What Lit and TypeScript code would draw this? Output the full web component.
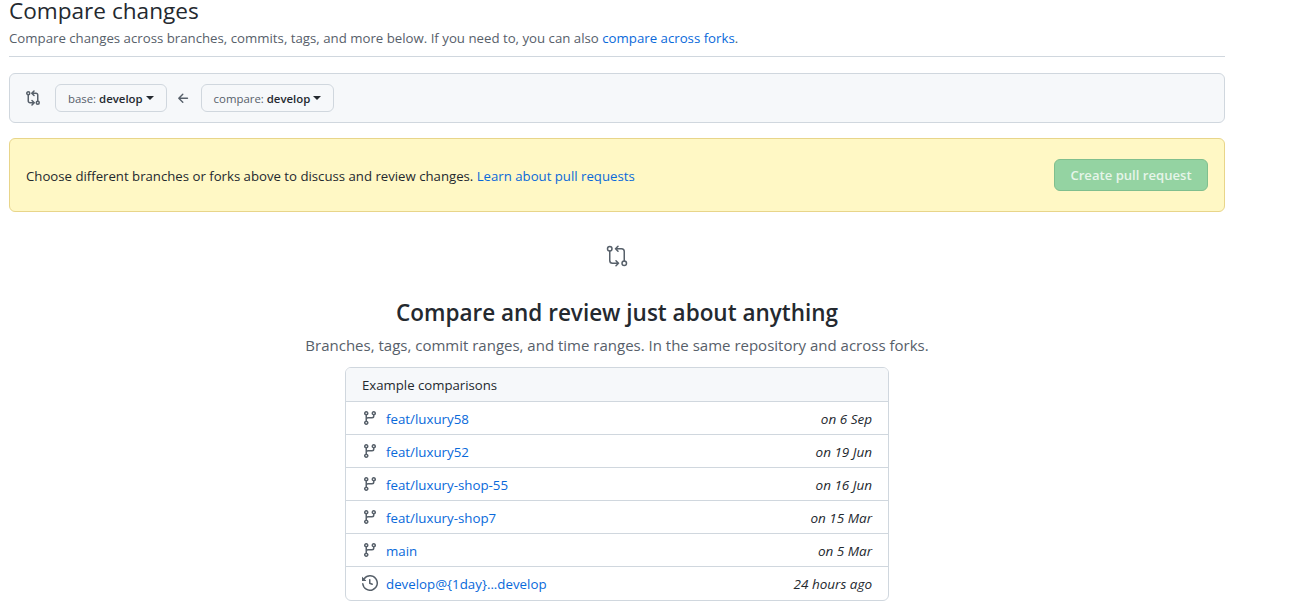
import { LitElement, html, css, svg } from "lit";
import { customElement } from "lit/decorators.js";

const compare = svg`<path d="M3.25 4.75V11a1.75 1.75 0 0 0 1.75 1.75h4M7 10.5l2.25 2.25L7 15M12.75 11.25V5A1.75 1.75 0 0 0 11 3.25H7M9 1 6.75 3.25 9 5.5" fill="none" stroke="currentColor" stroke-width="1.5" stroke-linecap="round" stroke-linejoin="round"/><circle cx="3.25" cy="3.25" r="1.5" fill="none" stroke="currentColor" stroke-width="1.5"/><circle cx="12.75" cy="12.75" r="1.5" fill="none" stroke="currentColor" stroke-width="1.5"/>`;
const compareBig = svg`<path d="M4.75 7V16.5a2.75 2.75 0 0 0 2.75 2.75H13.5M11 16.75l2.5 2.5-2.5 2.5M19.25 17V7.5a2.75 2.75 0 0 0-2.75-2.75H10.5M13 2.25l-2.5 2.5 2.5 2.5" fill="none" stroke="currentColor" stroke-width="1.5" stroke-linecap="round" stroke-linejoin="round"/><circle cx="4.75" cy="4.75" r="2.25" fill="none" stroke="currentColor" stroke-width="1.5"/><circle cx="19.25" cy="19.25" r="2.25" fill="none" stroke="currentColor" stroke-width="1.5"/>`;
const branch = svg`<path fill="currentColor" d="M9.5 3.25a2.25 2.25 0 1 1 3 2.122V6A2.5 2.5 0 0 1 10 8.5H6a1 1 0 0 0-1 1v1.128a2.251 2.251 0 1 1-1.5 0V5.372a2.25 2.25 0 1 1 1.5 0v1.836A2.493 2.493 0 0 1 6 7h4a1 1 0 0 0 1-1v-.628A2.25 2.25 0 0 1 9.5 3.25Zm-6 0a.75.75 0 1 0 1.5 0 .75.75 0 0 0-1.5 0Zm8.25-.75a.75.75 0 1 0 0 1.5.75.75 0 0 0 0-1.5ZM4.25 12a.75.75 0 1 0 0 1.5.75.75 0 0 0 0-1.5Z"/>`;
const history = svg`<path fill="currentColor" d="m.427 1.927 1.215 1.215a8.002 8.002 0 1 1-1.6 5.685.75.75 0 1 1 1.493-.154 6.5 6.5 0 1 0 1.18-4.458l1.358 1.358A.25.25 0 0 1 3.896 6H.25A.25.25 0 0 1 0 5.75V2.104a.25.25 0 0 1 .427-.177ZM7.75 4a.75.75 0 0 1 .75.75v2.992l2.028.812a.75.75 0 0 1-.557 1.392l-2.5-1A.751.751 0 0 1 7 8.25v-3.5A.75.75 0 0 1 7.75 4Z"/>`;
const arrowLeft = svg`<path fill="currentColor" d="M7.78 12.53a.75.75 0 0 1-1.06 0L2.47 8.28a.75.75 0 0 1 0-1.06l4.25-4.25a.751.751 0 0 1 1.042.018.751.751 0 0 1 .018 1.042L4.81 7h7.44a.75.75 0 0 1 0 1.5H4.81l2.97 2.97a.75.75 0 0 1 0 1.06Z"/>`;

const rows = [
  { icon: branch, name: "feat/luxury58", when: "on 6 Sep" },
  { icon: branch, name: "feat/luxury52", when: "on 19 Jun" },
  { icon: branch, name: "feat/luxury-shop-55", when: "on 16 Jun" },
  { icon: branch, name: "feat/luxury-shop7", when: "on 15 Mar" },
  { icon: branch, name: "main", when: "on 5 Mar" },
  { icon: history, name: "develop@{1day}...develop", when: "24 hours ago" },
];

@customElement("app-root")
export class AppRoot extends LitElement {
  static styles = css`
    :host {
      display: block;
      font-family: "Open Sans", "Noto Sans", sans-serif;
      font-size: 13.2px;
      color: #24292f;
      background: #fff;
    }
    a { color: #0969da; text-decoration: none; }
    svg { display: block; flex: none; }
    .page { width: 1216px; margin-left: 9px; }
    .subhead { height: 56px; border-bottom: 1px solid #d0d7de; box-sizing: content-box; }
    h2 { margin: 0; font-size: 22.6px; font-weight: 400; line-height: 22px; }
    .desc { margin-top: 7px; line-height: 18px; color: #57606a; font-size: 13.24px; }
    .range {
      margin-top: 16px; height: 50px; box-sizing: border-box;
      display: flex; align-items: center;
      background: #f6f8fa; border: 1px solid #d0d7de; border-radius: 6px;
      padding-left: 15px; color: #57606a;
    }
    .range .lead { margin-right: 14px; margin-top: -1px; }
    .branch-btn {
      height: 28px; box-sizing: border-box; padding: 0 12px;
      display: flex; align-items: center;
      background: #f6f8fa; border: 1px solid #d0d7de; border-radius: 6px;
      font-size: 11.4px; color: #57606a; white-space: pre;
    }
    .branch-btn b { color: #24292f; font-weight: 600; }
    .caret {
      margin-left: 3px; width: 0; height: 0;
      border: 4px solid transparent; border-top-color: #24292f; border-bottom: 0;
    }
    .arrow { margin: 0 10px 0 9px; width: 15px; height: 15px; }
    .flash {
      margin-top: 15px; height: 74px; box-sizing: border-box;
      display: flex; align-items: center; justify-content: space-between;
      background: #fff8c5; border: 1px solid #e8d58a; border-radius: 6px;
      padding: 0 16px; color: #24292f;
    }
    .flash-text { padding-top: 2px; }
    .create {
      width: 154px; height: 32px; box-sizing: border-box;
      display: flex; align-items: center; justify-content: center;
      background: #94d3a2; border: 1px solid #80bf8e; border-radius: 6px;
      color: #e6f5e9; font-size: 13.1px; font-weight: 600;
    }
    .blank { display: flex; flex-direction: column; align-items: center; }
    .big { margin-top: 32px; width: 24px; height: 24px; color: #57606a; }
    h3 { margin: 30px 0 0; font-size: 22.5px; font-weight: 600; line-height: 30px; }
    .lede { margin-top: 5px; font-size: 15px; line-height: 24px; color: #57606a; }
    .box {
      margin-top: 10px; width: 544px; box-sizing: border-box;
      border: 1px solid #d0d7de; border-radius: 6px; overflow: hidden;
    }
    .head {
      height: 33px; box-sizing: border-box; background: #f6f8fa;
      display: flex; align-items: center; padding-left: 16px;
    }
    .row {
      height: 33px; box-sizing: border-box; border-top: 1px solid #d0d7de;
      display: flex; align-items: center; padding: 2px 16px 0;
      gap: 8px;
    }
    .row:last-child { height: 34px; padding-top: 1px; }
    .row svg { color: #57606a; margin-top: -2px; }
    .row a { flex: 1; font-size: 13.3px; }
    .when { font-style: italic; color: #24292f; font-size: 13.5px; }
  `;

  render() {
    return html`<div class="page">
      <div class="subhead">
        <h2>Compare changes</h2>
        <div class="desc">Compare changes across branches, commits, tags, and more below. If you need to, you can also <a href="#">compare across forks</a>.</div>
      </div>
      <div class="range">
        <svg class="lead" width="16" height="16" viewBox="0 0 16 16">${compare}</svg>
        <div class="branch-btn">base: <b>develop</b><span class="caret"></span></div>
        <svg class="arrow" viewBox="0 0 16 16">${arrowLeft}</svg>
        <div class="branch-btn">compare: <b>develop</b><span class="caret"></span></div>
      </div>
      <div class="flash">
        <div class="flash-text">Choose different branches or forks above to discuss and review changes. <a href="#">Learn about pull requests</a></div>
        <div class="create">Create pull request</div>
      </div>
      <div class="blank">
        <svg class="big" viewBox="0 0 24 24">${compareBig}</svg>
        <h3>Compare and review just about anything</h3>
        <div class="lede">Branches, tags, commit ranges, and time ranges. In the same repository and across forks.</div>
        <div class="box">
          <div class="head">Example comparisons</div>
          ${rows.map(
            (r) => html`<div class="row">
              <svg width="16" height="16" viewBox="0 0 16 16">${r.icon}</svg>
              <a href="#">${r.name}</a>
              <span class="when">${r.when}</span>
            </div>`
          )}
        </div>
      </div>
    </div>`;
  }
}
